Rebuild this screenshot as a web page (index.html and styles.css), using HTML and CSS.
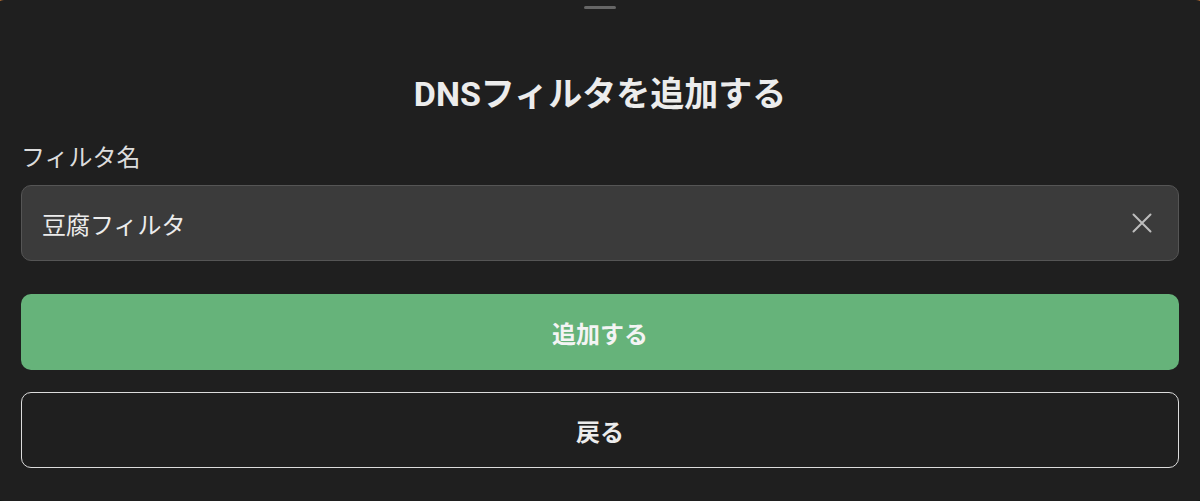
FILE: index.html
```html
<!DOCTYPE html>
<html lang="ja">
<head>
  <meta charset="UTF-8">
  <meta name="viewport" content="width=device-width, initial-scale=1.0">
  <title>DNSフィルタを追加する</title>
  <link rel="stylesheet" href="styles.css">
</head>
<body>
  <div class="sheet">
    <div class="handle"></div>
    <h1 class="title">DNSフィルタを追加する</h1>
    <label class="field-label" for="filterName">フィルタ名</label>
    <div class="field">
      <input id="filterName" class="field-input" type="text" value="豆腐フィルタ">
      <button class="field-clear" aria-label="クリア">
        <svg width="20" height="20" viewBox="0 0 20 20">
          <path d="M1.5 1.5 L18.5 18.5 M18.5 1.5 L1.5 18.5" stroke="#bdbdbd" stroke-width="2" stroke-linecap="round"/>
        </svg>
      </button>
    </div>
    <button class="btn btn-primary">追加する</button>
    <button class="btn btn-outline">戻る</button>
  </div>
</body>
</html>
```

FILE: styles.css
```css
html, body {
  margin: 0;
  height: 501px;
  overflow: hidden;
}
body {
  background: linear-gradient(to bottom, #e8883a 50%, #0c1712 50%);
  font-family: Roboto, "Noto Sans CJK JP", sans-serif;
  color: #ececec;
}
.sheet {
  box-sizing: border-box;
  height: 501px;
  margin: 0 -8px;
  padding: 6px 29px 0;
  background-color: #1f1f1f;
  border-radius: 12px;
  display: flex;
  flex-direction: column;
}
.handle {
  align-self: center;
  width: 32px;
  height: 3px;
  border-radius: 2px;
  background-color: #666;
}
.title {
  margin: 65px 0 0;
  font-size: 34px;
  line-height: 40px;
  font-weight: 700;
  text-align: center;
  color: #ececec;
}
.field-label {
  margin-top: 29px;
  font-size: 24px;
  line-height: 30px;
  color: #dcdcdc;
}
.field {
  margin-top: 12px;
  height: 76px;
  box-sizing: border-box;
  display: flex;
  align-items: center;
  background-color: #3b3b3b;
  border: 1px solid #555;
  border-radius: 10px;
  padding: 0 22px 0 20px;
}
.field-input {
  flex: 1;
  background: transparent;
  border: none;
  outline: none;
  font-family: inherit;
  font-size: 24px;
  color: #ececec;
  padding: 0;
}
.field-clear {
  background: none;
  border: none;
  padding: 4px;
  display: flex;
  cursor: pointer;
}
.btn {
  height: 76px;
  box-sizing: border-box;
  border-radius: 10px;
  font-family: inherit;
  font-size: 24px;
  font-weight: 700;
  cursor: pointer;
}
.btn-primary {
  margin-top: 33px;
  background-color: #66b37a;
  border: none;
  color: #f4f4f4;
}
.btn-outline {
  margin-top: 22px;
  background: transparent;
  border: 1.5px solid #dcdcdc;
  color: #ececec;
}
```
